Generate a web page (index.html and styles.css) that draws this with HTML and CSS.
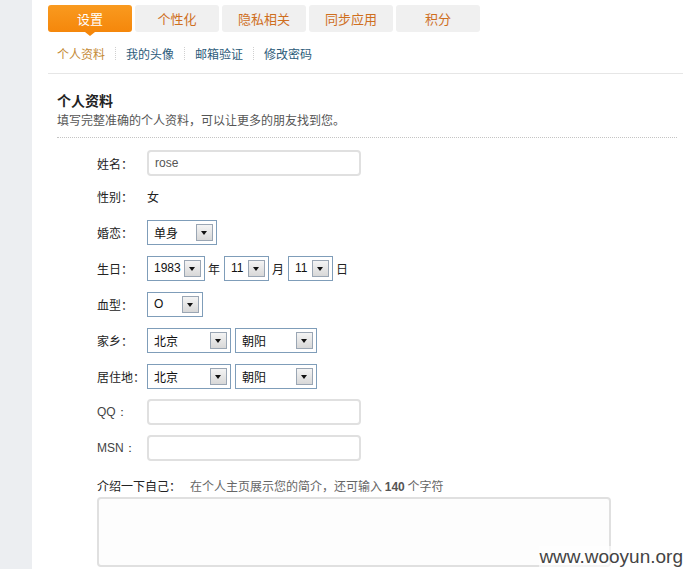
FILE: index.html
```html
<!DOCTYPE html>
<html lang="zh">
<head>
<meta charset="utf-8">
<title>设置 - 个人资料</title>
<link rel="stylesheet" href="styles.css">
</head>
<body>
<div class="page">
  <aside class="side"></aside>
  <main class="main">
    <nav class="tabs">
      <a class="tab active">设置</a>
      <a class="tab">个性化</a>
      <a class="tab">隐私相关</a>
      <a class="tab">同步应用</a>
      <a class="tab">积分</a>
    </nav>
    <nav class="subnav">
      <a class="sub current">个人资料</a><span class="sep"></span>
      <a class="sub">我的头像</a><span class="sep"></span>
      <a class="sub">邮箱验证</a><span class="sep"></span>
      <a class="sub">修改密码</a>
    </nav>
    <section class="panel">
      <h2 class="title">个人资料</h2>
      <p class="desc">填写完整准确的个人资料，可以让更多的朋友找到您。</p>
      <div class="form">
        <div class="row first"><span class="label">姓名：</span><div class="input"><span class="val">rose</span></div></div>
        <div class="row"><span class="label">性别：</span><span class="text">女</span></div>
        <div class="row"><span class="label">婚恋：</span><div class="sel w70"><span>单身</span><i class="arr"></i></div></div>
        <div class="row"><span class="label">生日：</span>
          <div class="sel w58 num"><span>1983</span><i class="arr"></i></div><span class="unit">年</span>
          <div class="sel w45 num"><span>11</span><i class="arr"></i></div><span class="unit">月</span>
          <div class="sel w45 num"><span>11</span><i class="arr"></i></div><span class="unit">日</span>
        </div>
        <div class="row"><span class="label">血型：</span><div class="sel w56 num"><span>O</span><i class="arr"></i></div></div>
        <div class="row"><span class="label">家乡：</span>
          <div class="sel w84"><span>北京</span><i class="arr"></i></div>
          <div class="sel w83 gap4"><span>朝阳</span><i class="arr"></i></div>
        </div>
        <div class="row"><span class="label">居住地：</span>
          <div class="sel w84"><span>北京</span><i class="arr"></i></div>
          <div class="sel w83 gap4"><span>朝阳</span><i class="arr"></i></div>
        </div>
        <div class="row"><span class="label lat">QQ：</span><div class="input"></div></div>
        <div class="row"><span class="label lat">MSN：</span><div class="input"></div></div>
        <div class="intro"><span class="label2">介绍一下自己：</span><span class="hint">在个人主页展示您的简介，还可输入 <b>140</b> 个字符</span></div>
        <div class="textarea"></div>
      </div>
    </section>
  </main>
  <div class="watermark">www.wooyun.org</div>
</div>
</body>
</html>
```

FILE: styles.css
```css
html, body {
  margin: 0;
  padding: 0;
  height: 100%;
}
body {
  font-family: "Noto Sans CJK SC", "Liberation Sans", sans-serif;
  font-size: 12px;
  color: #333;
  background: #fff;
  overflow: hidden;
}
.page {
  display: flex;
  height: 569px;
  position: relative;
}
.side {
  width: 32px;
  flex: none;
  background: #eceef1;
}
.main {
  flex: 1;
  background: #fff;
  padding-top: 5px;
}
.tabs {
  display: flex;
  gap: 3px;
  padding-left: 16px;
}
.tab {
  width: 84px;
  height: 27px;
  line-height: 27px;
  text-align: center;
  background: #f0f0f0;
  border-radius: 3px;
  color: #cf6f1f;
  font-size: 13px;
  position: relative;
}
.tab.active {
  background: linear-gradient(#f99a1f, #f5870b);
  color: #fff;
}
.tab.active::after {
  content: "";
  position: absolute;
  left: 37px;
  bottom: -4px;
  border-left: 5px solid transparent;
  border-right: 5px solid transparent;
  border-top: 4px solid #f5870b;
}
.subnav {
  display: flex;
  align-items: center;
  height: 24px;
  margin-top: 9px;
  margin-left: 16px;
  padding-left: 9px;
  padding-bottom: 8px;
  border-bottom: 1px solid #e6e6e6;
}
.sub {
  color: #2c5b7a;
  font-size: 12px;
}
.sub.current {
  color: #c48a35;
}
.sep {
  width: 0;
  height: 13px;
  border-left: 1px dotted #d0d0d0;
  margin: 0 10px;
}
.panel {
  padding: 16px 6px 0 25px;
}
.title {
  margin: 0;
  font-size: 14px;
  font-weight: bold;
  color: #222;
  line-height: 20px;
}
.desc {
  margin: 0;
  color: #555;
  line-height: 20px;
  padding-bottom: 7px;
  border-bottom: 1px dotted #c4c4c4;
}
.form {
  padding-top: 12px;
  padding-left: 40px;
}
.row {
  display: flex;
  align-items: center;
  height: 26px;
  margin-bottom: 10px;
}
.row.first {
  margin-bottom: 7px;
}
.label {
  width: 50px;
  flex: none;
  color: #222;
}
.label.lat {
  font-family: "Liberation Sans", sans-serif;
  color: #444;
}
.input {
  width: 204px;
  height: 22px;
  border: 2px solid #e0e0e0;
  border-radius: 4px;
  display: flex;
  align-items: center;
  padding-left: 6px;
  box-sizing: content-box;
  background: #fff;
}
.val {
  font-family: "Liberation Sans", sans-serif;
  color: #555;
  font-size: 12px;
}
.text {
  color: #222;
}
.sel {
  height: 25px;
  border: 1px solid #7f9db9;
  display: flex;
  align-items: center;
  justify-content: space-between;
  padding: 0 3px 0 6px;
  box-sizing: border-box;
  color: #111;
  font-size: 12px;
}
.sel.num span {
  font-family: "Liberation Sans", sans-serif;
  font-size: 12px;
}
.w70 { width: 70px; }
.w58 { width: 58px; }
.w45 { width: 45px; }
.w56 { width: 56px; }
.w84 { width: 84px; }
.w83 { width: 82px; }
.gap4 { margin-left: 4px; }
.arr {
  width: 15px;
  height: 15px;
  border: 1px solid #9aa6b4;
  background: linear-gradient(#f4f4f4, #d8d8d8);
  position: relative;
  flex: none;
}
.arr::after {
  content: "";
  position: absolute;
  left: 4px;
  top: 6px;
  border-left: 3.5px solid transparent;
  border-right: 3.5px solid transparent;
  border-top: 4px solid #111;
}
.unit {
  margin: 0 4px 0 3px;
  color: #222;
}
.intro {
  display: flex;
  align-items: center;
  height: 20px;
  margin-top: 14px;
}
.label2 {
  width: 93px;
  color: #222;
}
.hint {
  color: #666;
}
.hint b {
  font-family: "Liberation Sans", sans-serif;
  color: #555;
}
.textarea {
  width: 510px;
  height: 66px;
  border: 2px solid #e0e0e0;
  border-radius: 4px;
  margin-top: 2px;
  background: #fdfdfd;
}
.watermark {
  position: absolute;
  right: 0;
  bottom: 1px;
  font-family: "Liberation Sans", sans-serif;
  font-size: 19px;
  color: #444;
  background: rgba(255,255,255,0.6);
  line-height: 22px;
}
```
